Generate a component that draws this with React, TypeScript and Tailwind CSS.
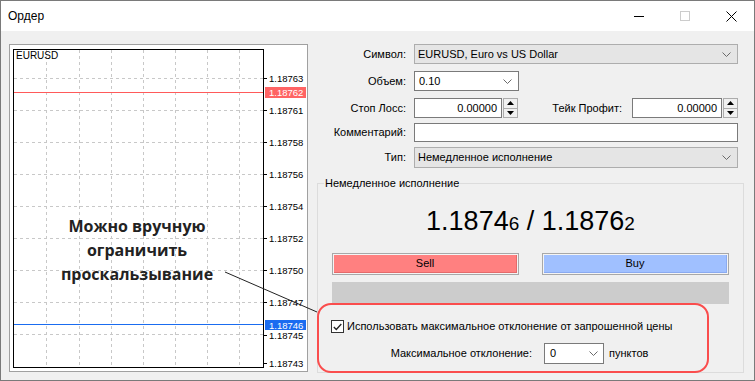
import React from 'react';

const Chevron = () => (
  <svg width="9" height="5" viewBox="0 0 9 5" className="shrink-0">
    <path d="M0.5 0.5 L4.5 4.5 L8.5 0.5" fill="none" stroke="#6a6a6a" strokeWidth="1" />
  </svg>
);

const Spinner = () => (
  <div className="ml-[1px] flex h-[20px] w-[15px] flex-col border border-[#acacac] bg-[#f0f0f0]">
    <div className="flex flex-1 items-center justify-center border-b border-[#acacac]">
      <svg width="7" height="4" viewBox="0 0 7 4">
        <path d="M0 4 L3.5 0 L7 4Z" fill="#000" />
      </svg>
    </div>
    <div className="flex flex-1 items-center justify-center">
      <svg width="7" height="4" viewBox="0 0 7 4">
        <path d="M0 0 L3.5 4 L7 0Z" fill="#000" />
      </svg>
    </div>
  </div>
);

const gridX = [36, 69, 101, 133, 165, 197, 229];
const gridY = [33, 65, 97, 129, 161, 193, 225, 257, 289];

const axis = [
  { y: 33, v: '1.18763' },
  { y: 65, v: '1.18761' },
  { y: 97, v: '1.18758' },
  { y: 129, v: '1.18756' },
  { y: 161, v: '1.18754' },
  { y: 193, v: '1.18752' },
  { y: 225, v: '1.18750' },
  { y: 257, v: '1.18747' },
  { y: 290, v: '1.18745' },
  { y: 318, v: '1.18743' },
];

const Chart = () => (
  <svg width="297" height="326" className="block" fontFamily="'Liberation Sans', Arial, sans-serif">
    {gridY.map((y) => (
      <line key={'h' + y} x1="4" x2="253" y1={y + 0.5} y2={y + 0.5} stroke="#c8c8c8" strokeDasharray="3 3" />
    ))}
    {gridX.map((x) => (
      <line key={'v' + x} x1={x + 0.5} x2={x + 0.5} y1="5" y2="322" stroke="#c8c8c8" strokeDasharray="3 3" />
    ))}
    <line x1="4" x2="253" y1="47.5" y2="47.5" stroke="#ff5a5a" />
    <line x1="4" x2="253" y1="279.5" y2="279.5" stroke="#1a6cf0" />
    <rect x="3.5" y="4.5" width="250" height="318" fill="none" stroke="#000" />
    <text x="6" y="14" fontSize="10" fill="#000">EURUSD</text>
    {axis.map((a) => (
      <g key={a.v}>
        <line x1="254" x2="257" y1={a.y + 0.5} y2={a.y + 0.5} stroke="#000" />
        <text x="259" y={a.y + 4} fontSize="9.5" fill="#000">{a.v}</text>
      </g>
    ))}
    <rect x="255" y="42" width="41" height="11" fill="#ff6464" />
    <text x="259" y="51" fontSize="9.5" fill="#fff">1.18762</text>
    <rect x="255" y="275" width="41" height="10" fill="#1a6cf0" />
    <text x="259" y="283.5" fontSize="9.5" fill="#fff">1.18746</text>
  </svg>
);

export default function App() {
  return (
    <div className="relative h-[381px] w-[755px] overflow-hidden border border-[#7a7a7a] bg-[#f0f0f0] font-['Liberation_Sans',Arial,sans-serif] text-[11px] text-black">
      {/* title bar */}
      <div className="flex h-[30px] items-center justify-between bg-white">
        <span className="pl-[7px] text-[12px]">Ордер</span>
        <div className="flex h-full">
          <div className="flex w-[46px] items-center justify-center">
            <div className="h-[1px] w-[10px] bg-black" />
          </div>
          <div className="flex w-[46px] items-center justify-center">
            <div className="h-[10px] w-[10px] border border-[#cccccc]" />
          </div>
          <div className="flex w-[46px] items-center justify-center">
            <svg width="11" height="11" viewBox="0 0 11 11">
              <path d="M0.5 0.5 L10.5 10.5 M10.5 0.5 L0.5 10.5" stroke="#000" strokeWidth="1" />
            </svg>
          </div>
        </div>
      </div>

      {/* body */}
      <div className="flex">
        <div className="ml-[8px] mt-[13px] h-[328px] w-[299px] border border-[#a0a0a0] bg-white">
          <Chart />
        </div>

        <div className="flex flex-col pt-[13px]">
          <div className="flex h-[20px] items-center">
            <div className="w-[98px] text-right">Символ:</div>
            <div className="ml-[8px] flex h-full w-[324px] items-center justify-between border border-[#adadad] bg-[#e5e5e5] pl-[3px] pr-[6px]">
              <span>EURUSD, Euro vs US Dollar</span>
              <Chevron />
            </div>
          </div>

          <div className="mt-[7px] flex h-[20px] items-center">
            <div className="w-[98px] text-right">Объем:</div>
            <div className="ml-[8px] flex h-full w-[105px] items-center justify-between border border-[#7a7a7a] bg-white pl-[4px] pr-[6px]">
              <span>0.10</span>
              <Chevron />
            </div>
          </div>

          <div className="mt-[7px] flex h-[20px] items-center">
            <div className="w-[98px] text-right">Стоп Лосс:</div>
            <div className="ml-[8px] flex w-[324px] items-center">
              <div className="flex h-[20px] w-[88px] items-center justify-end border border-[#7a7a7a] bg-white pr-[4px]">0.00000</div>
              <Spinner />
              <div className="flex-1 pr-[10px] text-right">Тейк Профит:</div>
              <div className="flex h-[20px] w-[90px] items-center justify-end border border-[#7a7a7a] bg-white pr-[4px]">0.00000</div>
              <Spinner />
            </div>
          </div>

          <div className="mt-[5px] flex h-[19px] items-center">
            <div className="w-[98px] text-right">Комментарий:</div>
            <div className="ml-[8px] h-full w-[324px] border border-[#7a7a7a] bg-white" />
          </div>

          <div className="mt-[5px] flex h-[21px] items-center">
            <div className="w-[98px] text-right">Тип:</div>
            <div className="ml-[8px] flex h-full w-[324px] items-center justify-between border border-[#adadad] bg-[#e5e5e5] pl-[3px] pr-[6px]">
              <span>Немедленное исполнение</span>
              <Chevron />
            </div>
          </div>

          {/* group box */}
          <div className="relative ml-[9px] mt-[15px] w-[427px] border border-[#dcdcdc] pb-[8px] pt-[22px]">
            <span className="absolute -top-[7px] left-[6px] bg-[#f0f0f0] px-[1px] leading-[13px]">Немедленное исполнение</span>

            <div className="text-center text-[27px] leading-[30px]">
              1.1874<span className="text-[19px]">6</span> / 1.1876<span className="text-[19px]">2</span>
            </div>

            <div className="mx-[14px] mt-[14px] flex justify-between">
              <div className="h-[22px] w-[187px] border border-[#a8a8a8] bg-[#f4f4f4] p-[1px]">
                <div className="flex h-full items-center justify-center border-b border-r border-[#e46a6a] bg-[#ff8080]">Sell</div>
              </div>
              <div className="h-[22px] w-[187px] border border-[#a8a8a8] bg-[#f4f4f4] p-[1px]">
                <div className="flex h-full items-center justify-center border-b border-r border-[#8aaaf0] bg-[#a0c0ff]">Buy</div>
              </div>
            </div>

            <div className="mx-[14px] mt-[7px] h-[22px] bg-[#cccccc]" />

            <div className="ml-[13px] mt-[16px] flex h-[13px] items-center">
              <div className="flex h-[13px] w-[13px] items-center justify-center border border-[#333333] bg-white">
                <svg width="9" height="8" viewBox="0 0 9 8">
                  <path d="M0.8 4 L3.3 6.5 L8.3 1" fill="none" stroke="#222" strokeWidth="1.3" />
                </svg>
              </div>
              <span className="ml-[3px]">Использовать максимальное отклонение от запрошенной цены</span>
            </div>

            <div className="mt-[10px] flex h-[21px] items-center">
              <div className="w-[214px] text-right">Максимальное отклонение:</div>
              <div className="ml-[12px] flex h-full w-[60px] items-center justify-between border border-[#7a7a7a] bg-white pl-[5px] pr-[5px]">
                <span>0</span>
                <Chevron />
              </div>
              <span className="ml-[5px]">пунктов</span>
            </div>
          </div>
        </div>
      </div>

      {/* annotation overlay */}
      <div className="absolute left-[36px] top-[213px] w-[200px] text-center font-['Open_Sans',sans-serif] text-[16px] font-bold leading-[24px] text-[#222222]">
        Можно вручную
        <br />
        ограничить
        <br />
        проскальзывание
      </div>
      <svg className="pointer-events-none absolute left-0 top-0" width="753" height="379">
        <line x1="224" y1="271" x2="316" y2="311" stroke="#222" strokeWidth="1" />
      </svg>
      <div className="pointer-events-none absolute left-[316px] top-[302px] h-[70px] w-[392px] rounded-[14px] border-2 border-[#fa4d4d]" />
    </div>
  );
}
